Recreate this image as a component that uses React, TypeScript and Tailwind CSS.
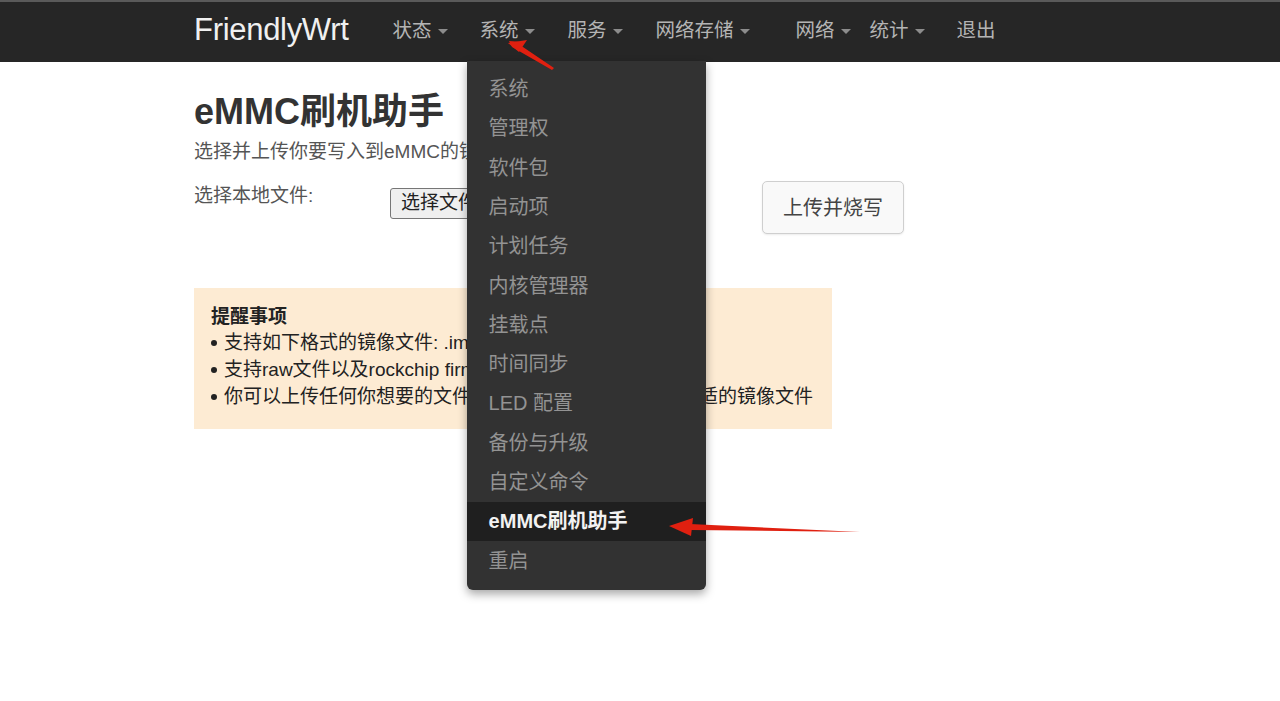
import React from "react";

const font = { fontFamily: '"Liberation Sans", "Noto Sans CJK SC", sans-serif' };

function Caret() {
  return <span className="ml-[6px] inline-block w-0 h-0 border-l-[5px] border-r-[5px] border-t-[5px] border-l-transparent border-r-transparent border-t-[#8c8c8c] align-middle" />;
}

const navItems: { label: string; w: string; caret: boolean }[] = [
  { label: "状态", w: "w-[87px]", caret: true },
  { label: "系统", w: "w-[88px]", caret: true },
  { label: "服务", w: "w-[88px]", caret: true },
  { label: "网络存储", w: "w-[140px]", caret: true },
  { label: "网络", w: "w-[74px]", caret: true },
  { label: "统计", w: "w-[87px]", caret: true },
  { label: "退出", w: "w-[60px]", caret: false },
];

const menu = ["系统", "管理权", "软件包", "启动项", "计划任务", "内核管理器", "挂载点", "时间同步", "LED 配置", "备份与升级", "自定义命令", "eMMC刷机助手", "重启"];

function Dropdown() {
  return (
    <div className="absolute left-[-13px] top-[45px] w-[239px] bg-[#323232] rounded-b-[6px] shadow-[0_4px_10px_rgba(0,0,0,0.35)] pt-[8px] pb-[10px] z-10">
      {menu.map((m) => {
        const active = m === "eMMC刷机助手";
        return (
          <div
            key={m}
            className={`h-[39.3px] flex items-center pl-[22px] text-[20px] whitespace-nowrap ${active ? "bg-[#1f1f1f] text-[#f2f2f2] font-bold" : "text-[#939393]"}`}
          >
            {m}
          </div>
        );
      })}
    </div>
  );
}

export default function App() {
  return (
    <div className="relative w-[1280px] h-[701px] bg-white overflow-hidden" style={font}>
      <div className="h-[62px] bg-[#262626] border-t-[2px] border-[#5a5a5a]">
        <div className="w-[892px] mx-auto h-full flex items-center">
          <div className="text-[31px] text-[#f0f0f0] tracking-[-0.3px] leading-none mt-[-6px]">FriendlyWrt</div>
          <div className="flex items-center ml-[44px] mt-[-2px]">
            {navItems.map((n) => (
              <div key={n.label} className={`relative ${n.w} flex items-center text-[19.5px] text-[#b4b4b4] whitespace-nowrap`}>
                <span>{n.label}</span>
                {n.caret && <Caret />}
                {n.label === "系统" && <Dropdown />}
              </div>
            ))}
          </div>
        </div>
      </div>

      <div className="w-[892px] mx-auto">
        <h1 className="mt-[30px] text-[36px] font-bold text-[#333] leading-[40px]">eMMC刷机助手</h1>
        <p className="mt-[8px] text-[19px] text-[#555] leading-[24px] whitespace-nowrap">选择并上传你要写入到eMMC的镜像文件</p>
        <div className="flex items-start mt-[19px]">
          <div className="w-[196px] text-[19px] text-[#555] leading-[24px] pt-[1px]">选择本地文件:</div>
          <div className="mt-[5px] h-[31px] border border-[#767676] rounded-[3px] bg-[#efefef] px-[10px] flex items-center text-[19px] text-[#222] whitespace-nowrap">选择文件 未选择任何文件</div>
          <div className="ml-auto mr-[182px] mt-[-2px] w-[142px] h-[53px] border border-[#cfcfcf] rounded-[5px] bg-[#f9f9f9] flex items-center justify-center text-[20px] text-[#444] shadow-[0_1px_2px_rgba(0,0,0,0.08)]">上传并烧写</div>
        </div>
        <div className="mt-[54px] w-[638px] h-[141px] bg-[#fdebd3] pl-[17px] pt-[17px] text-[19px] text-[#222] leading-[27px]">
          <div className="font-bold text-[19px] leading-[24px]">提醒事项</div>
          <ul>
            <li className="flex items-center whitespace-nowrap"><span className="w-[6px] h-[6px] rounded-full bg-[#222] mr-[7px]" />支持如下格式的镜像文件: .img, .img.gz, .img.xz</li>
            <li className="flex items-center whitespace-nowrap"><span className="w-[6px] h-[6px] rounded-full bg-[#222] mr-[7px]" />支持raw文件以及rockchip firmware格式的文件</li>
            <li className="flex items-center whitespace-nowrap"><span className="w-[6px] h-[6px] rounded-full bg-[#222] mr-[7px]" />你可以上传任何你想要的文件，但请确保你所上传的是合适的镜像文件</li>
          </ul>
        </div>
      </div>

      <svg className="absolute left-0 top-0 pointer-events-none z-20" width="1280" height="701">
        <polygon points="552,70 512,47 509,41 523,42 520,45 554,68" fill="#e02010" />
        <path d="M508,43 L527,40 L519,52 Z" fill="#e02010" />
        <path d="M860,532 L690,524 L690,530 Z" fill="#e02010" />
        <path d="M669,526 L693,518 L691,536 Z" fill="#e02010" />
      </svg>
    </div>
  );
}
